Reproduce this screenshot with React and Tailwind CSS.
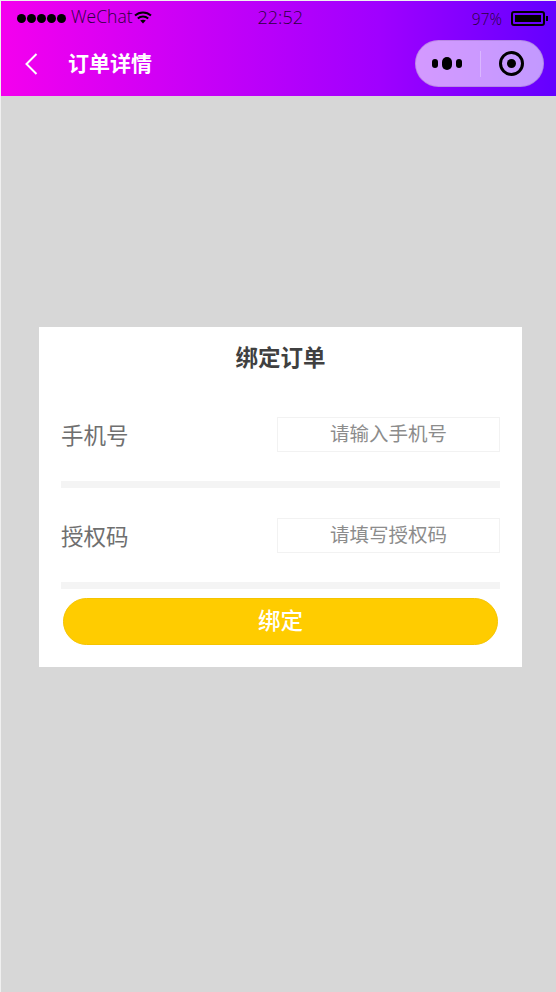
const cjk = '"Open Sans","Noto Sans CJK SC",sans-serif';

function Field({ label, placeholder }) {
  return (
    <div className="flex flex-col">
      <div className="flex items-center justify-between h-[94px] px-[22px]">
        <span className="text-[22.5px] leading-[30px] text-[#6f6f6f] mt-[4px]">{label}</span>
        <div className="w-[223px] h-[35px] border border-[#f2f2f2] flex items-center justify-center text-[19.5px] text-[#8c8c8c]">
          {placeholder}
        </div>
      </div>
      <div className="mx-[22px] h-[7px] bg-[#f4f4f4]" />
    </div>
  );
}

export default function App() {
  return (
    <div
      className="w-[556px] h-[992px] bg-[#d7d7d7] border-l border-t border-[#f0f0f0] flex flex-col overflow-hidden"
      style={{ fontFamily: cjk }}
    >
      <header className="h-[95px] bg-linear-to-r/srgb from-[#f400ee] via-[#a000ff] via-[68%] to-[#6400ff] flex flex-col shrink-0">
        <div className="h-[34px] flex items-center pl-[16px] pr-[8px] text-[#2c0040]">
          <div className="flex items-center gap-[1px]">
            {[0, 1, 2, 3, 4].map((i) => (
              <span key={i} className="w-[9px] h-[9px] rounded-full bg-black" />
            ))}
          </div>
          <span className="ml-[5px] text-[17.5px] font-light leading-none mb-[2px]">WeChat</span>
          <svg width="18" height="13" viewBox="0 0 18 13" className="ml-[1px] mb-[1px]">
            <path d="M1 4.5C5.5.4 12.5.4 17 4.5" fill="none" stroke="#000" strokeWidth="2" />
            <path d="M3.8 7.4c3-2.6 7.4-2.6 10.4 0" fill="none" stroke="#000" strokeWidth="2" />
            <path d="M6.2 9.6c1.6-1.3 4-1.3 5.6 0L9 12.6z" fill="#000" />
          </svg>
          <span className="ml-[106px] text-[18px] font-light leading-none mb-[2px]">22:52</span>
          <span className="ml-auto text-[15.5px] font-light leading-none mt-[3px]">97%</span>
          <div className="ml-[9px] flex items-center">
            <div className="w-[34px] h-[15px] border-2 border-black rounded-[3px] p-[2px]">
              <div className="w-full h-full bg-black" />
            </div>
            <div className="w-[2px] h-[5px] bg-black ml-[1px]" />
          </div>
        </div>
        <div className="flex-1 flex items-center pl-[24px] pr-[12px] pb-[4px]">
          <svg width="14" height="22" viewBox="0 0 14 22">
            <path d="M11.5 1 1.5 11 11.5 21" fill="none" stroke="#fff" strokeWidth="2" />
          </svg>
          <span className="ml-[29px] text-[21px] font-bold text-white leading-none">订单详情</span>
          <div className="ml-auto w-[129px] h-[47px] rounded-full bg-white/60 border border-black/10 flex items-center">
            <div className="w-[63px] flex items-center justify-center gap-[4px] pr-[1px]">
              <span className="w-[6px] h-[9px] rounded-full bg-black" />
              <span className="w-[10px] h-[13px] rounded-full bg-black" />
              <span className="w-[6px] h-[9px] rounded-full bg-black" />
            </div>
            <div className="w-px h-[26px] bg-white/30 ml-px" />
            <div className="flex-1 flex items-center justify-center pr-[2px]">
              <div className="w-[25px] h-[25px] rounded-full border-[3px] border-black flex items-center justify-center">
                <div className="w-[9px] h-[9px] rounded-full bg-black" />
              </div>
            </div>
          </div>
        </div>
      </header>

      <main className="flex-1 pl-[38px] pt-[231px]">
        <section className="w-[483px] h-[340px] bg-white flex flex-col">
          <h1 className="h-[60px] shrink-0 flex items-center justify-center text-[22.5px] font-bold text-[#404040] pt-[2px]">
            绑定订单
          </h1>
          <Field label="手机号" placeholder="请输入手机号" />
          <Field label="授权码" placeholder="请填写授权码" />
          <button className="mx-[24px] mt-[9px] h-[47px] rounded-full bg-[#ffcc00] border border-[#f5c400] text-white text-[22.5px] font-medium pb-[2px]">
            绑定
          </button>
        </section>
      </main>
    </div>
  );
}
